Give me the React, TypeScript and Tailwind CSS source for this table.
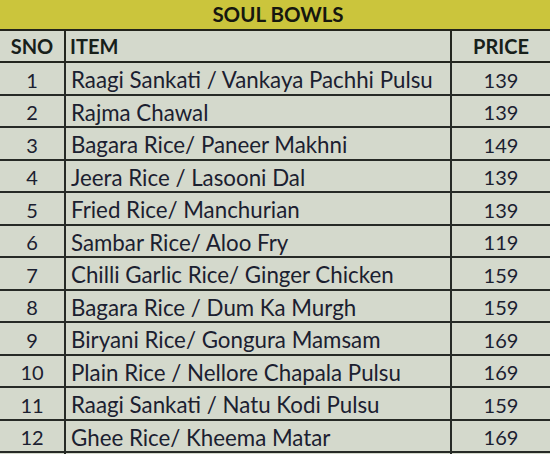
import React from "react";

const rows: [string, string, string][] = [
  ["1", "Raagi Sankati / Vankaya Pachhi Pulsu", "139"],
  ["2", "Rajma Chawal", "139"],
  ["3", "Bagara Rice/ Paneer Makhni", "149"],
  ["4", "Jeera Rice / Lasooni Dal", "139"],
  ["5", "Fried Rice/ Manchurian", "139"],
  ["6", "Sambar Rice/ Aloo Fry", "119"],
  ["7", "Chilli Garlic Rice/ Ginger Chicken", "159"],
  ["8", "Bagara Rice / Dum Ka Murgh", "159"],
  ["9", "Biryani Rice/ Gongura Mamsam", "169"],
  ["10", "Plain Rice / Nellore Chapala Pulsu", "169"],
  ["11", "Raagi Sankati / Natu Kodi Pulsu", "159"],
  ["12", "Ghee Rice/ Kheema Matar", "169"],
];

export default function App() {
  return (
    <div
      className="w-[550px] h-[454px] overflow-hidden bg-[#d4d9cc] text-[#1b2030]"
      style={{ fontFamily: "Lato, 'Open Sans', sans-serif" }}
    >
      <div className="h-[31px] bg-[#cbc53c] border-b-2 border-[#23241c] flex items-center justify-center font-bold text-[20.5px] text-[#16170f] pl-[6px]">
        SOUL BOWLS
      </div>
      <div className="grid grid-cols-[66px_386px_98px] h-[32px] border-b-2 border-[#23261f] font-bold text-[20px] text-[#17201a]">
        <div className="border-r-2 border-[#23261f] flex items-center justify-center">SNO</div>
        <div className="border-r-2 border-[#23261f] flex items-center pl-[4px]">ITEM</div>
        <div className="flex items-center justify-center">PRICE</div>
      </div>
      {rows.map(([n, item, price]) => (
        <div
          key={n}
          className="grid grid-cols-[66px_386px_98px] h-[32.5px] border-b-2 border-[#262a26]"
        >
          <div className="border-r-2 border-[#262a26] flex items-center justify-center text-[20px]">{n}</div>
          <div className="border-r-2 border-[#262a26] flex items-center pl-[5px] whitespace-nowrap text-[22.3px]">{item}</div>
          <div className="flex items-center justify-center text-[20px]">{price}</div>
        </div>
      ))}
    </div>
  );
}
